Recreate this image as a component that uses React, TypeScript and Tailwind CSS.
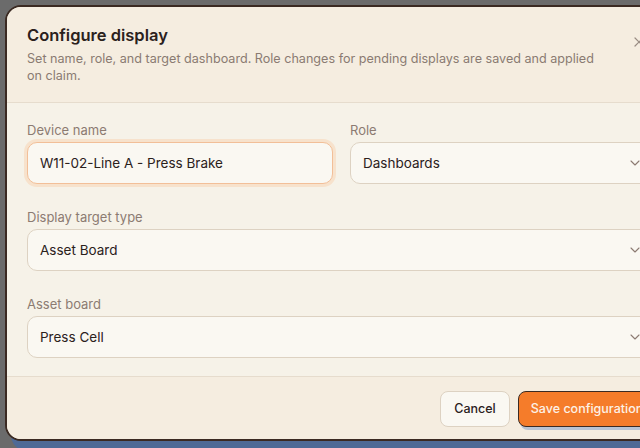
import { X, ChevronDown } from "lucide-react";

const SelectBox = ({ value, className = "" }: { value: string; className?: string }) => (
  <div
    className={`flex h-[42px] items-center justify-between rounded-[10px] border border-[#ddd2c2] bg-[#faf8f2] pl-3 pr-3 text-[13.5px] text-[#2b211c] ${className}`}
  >
    <span>{value}</span>
    <ChevronDown className="h-4 w-4 text-[#8c7b72]" strokeWidth={1.6} />
  </div>
);

export default function App() {
  return (
    <div
      className="h-[448px] w-[640px] overflow-hidden bg-[#6b6b6b] pl-[5px] pt-[5px]"
      style={{ fontFamily: "Inter, 'Noto Sans', sans-serif" }}
    >
      <div className="relative w-[673px] overflow-hidden rounded-[16px] border-2 border-[#3b2a22] bg-[#f6f2e8] shadow-[6px_10px_0_0_#4e6a96]">
        {/* Header */}
        <div className="border-b border-[#e6dccd] bg-[#f5ede0] px-5 pb-[18px] pt-[18px]">
          <h2 className="text-[16.5px] font-semibold leading-5 text-[#2b211c]">Configure display</h2>
          <p className="mt-[5px] pr-[60px] text-[12.6px] leading-[17px] text-[#8a7b72]">
            Set name, role, and target dashboard. Role changes for pending displays are saved and applied on claim.
          </p>
          <button className="absolute right-[29px] top-[27px] text-[#9a8d84]">
            <X className="h-4 w-4" strokeWidth={1.8} />
          </button>
        </div>

        {/* Body */}
        <div className="flex flex-col gap-[24px] px-5 pb-[18px] pt-[18px]">
          <div className="grid grid-cols-2 gap-[17px]">
            <div className="flex flex-col gap-[3px]">
              <label className="text-[13px] leading-[18px] text-[#8c7b72]">Device name</label>
              <div className="flex h-[42px] items-center rounded-[10px] border border-[#f2bf98] bg-[#faf8f2] px-3 text-[13.5px] text-[#2b211c] ring-[3px] ring-[#f7e2cc]">
                W11-02-Line A - Press Brake
              </div>
            </div>
            <div className="flex flex-col gap-[3px]">
              <label className="text-[13px] leading-[18px] text-[#8c7b72]">Role</label>
              <SelectBox value="Dashboards" />
            </div>
          </div>

          <div className="flex flex-col gap-[3px]">
            <label className="text-[13px] leading-[18px] text-[#8c7b72]">Display target type</label>
            <SelectBox value="Asset Board" />
          </div>

          <div className="flex flex-col gap-[3px]">
            <label className="text-[13px] leading-[18px] text-[#8c7b72]">Asset board</label>
            <SelectBox value="Press Cell" />
          </div>
        </div>

        {/* Footer */}
        <div className="flex justify-end gap-2 border-t border-[#e6dccd] bg-[#f5ede0] px-5 pb-[12px] pt-[14px]">
          <button className="h-[36px] w-[70px] rounded-[8px] border border-[#ddd2c2] bg-[#faf8f2] text-[12.5px] font-medium text-[#2b211c]">
            Cancel
          </button>
          <button className="h-[36px] w-[138px] rounded-[8px] border border-[#3b2a22] bg-[#f57c2a] text-[12.5px] font-medium text-[#fdf1e6] shadow-[2px_3px_0_#b9c3d2]">
            Save configuration
          </button>
        </div>
      </div>
    </div>
  );
}
